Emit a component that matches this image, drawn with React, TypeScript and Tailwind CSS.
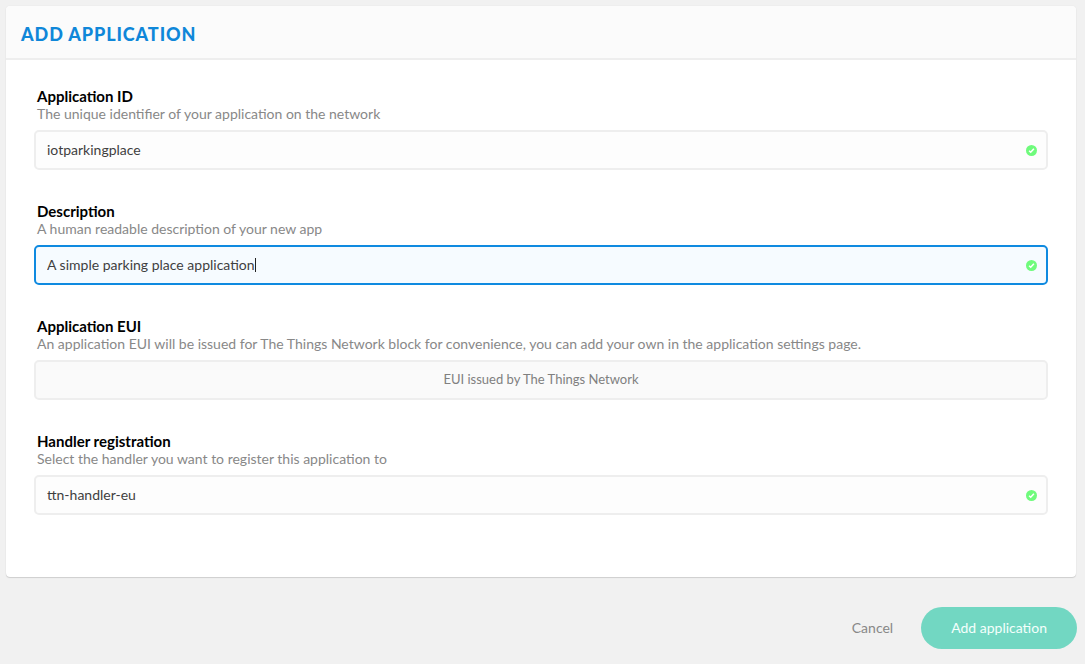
import React, { useState } from 'react';
import clsx from 'clsx';

interface FieldProps {
  id: string;
  label: string;
  help: string;
  valid?: boolean;
  children: React.ReactNode;
}

const control =
  'block w-full h-10 rounded-[5px] border-2 border-[#eeeeee] bg-[#fdfdfd] px-[11px] pb-[2px] text-[14px] text-[#3f3f3f] outline-none appearance-none';

const ValidIcon = () => (
  <svg className="pointer-events-none absolute right-[11px] top-[15px]" width="11" height="11" viewBox="0 0 11 11" aria-hidden="true">
    <circle cx="5.5" cy="5.5" r="5.5" fill="#6ffb7c" />
    <path d="M3.1 5.8 4.7 7.3 7.9 3.7" fill="none" stroke="#fff" strokeWidth="1.5" />
  </svg>
);

const Field: React.FC<FieldProps> = ({ id, label, help, valid, children }) => (
  <div>
    <div className="px-[3px] text-[14px] leading-[18px]">
      <label htmlFor={id} className="block text-[15px] font-bold text-black">
        {label}
      </label>
      <p id={`${id}-help`} className="text-[#888888]">{help}</p>
    </div>
    <div className="relative mt-[7px]">
      {children}
      {valid && <ValidIcon />}
    </div>
  </div>
);

export default function App() {
  const [appId, setAppId] = useState('iotparkingplace');
  const [description, setDescription] = useState('A simple parking place application');
  const [handler, setHandler] = useState('ttn-handler-eu');

  return (
    <form
      onSubmit={(e) => e.preventDefault()}
      className="min-h-screen bg-[#f1f1f1] pt-[6px] pr-2 pb-[15px] pl-[6px] font-['Lato',sans-serif]"
    >
      <section className="mr-px rounded-[4px] bg-white shadow-[0_0_1px_#0002,0_1px_1px_#0002]">
        <header className="rounded-t-[4px] border-b-2 border-[#eeeeee] bg-[#fbfbfb] px-[15px] pt-[18px] pb-[14px]">
          <h1 className="text-[18px] leading-5 font-black tracking-wider text-[#0f87d9] uppercase">
            Add application
          </h1>
        </header>

        <div className="flex flex-col gap-8 px-7 pt-[27px] pb-[62px]">
          <Field id="app-id" label="Application ID" help="The unique identifier of your application on the network" valid>
            <input
              id="app-id"
              aria-describedby="app-id-help"
              className={control}
              value={appId}
              onChange={(e) => setAppId(e.target.value)}
            />
          </Field>

          <Field id="description" label="Description" help="A human readable description of your new app" valid>
            <input
              id="description"
              aria-describedby="description-help"
              autoFocus
              onFocus={(e) => e.target.setSelectionRange(e.target.value.length, e.target.value.length)}
              className={clsx(control, 'peer caret-transparent focus:border-[#0f8ae0] focus:bg-[#f6fbff]')}
              value={description}
              onChange={(e) => setDescription(e.target.value)}
            />
            {/* Steady caret after the typed text */}
            <span
              aria-hidden="true"
              className="pointer-events-none absolute inset-y-0 left-[13px] hidden items-center text-[14px] whitespace-pre peer-focus:flex"
            >
              <span className="invisible">{description}</span>
              <span className="h-[14px] w-px bg-[#222222]" />
            </span>
          </Field>

          <Field
            id="app-eui"
            label="Application EUI"
            help="An application EUI will be issued for The Things Network block for convenience, you can add your own in the application settings page."
          >
            <input
              id="app-eui"
              aria-describedby="app-eui-help"
              readOnly
              className="block h-10 w-full rounded-[5px] border-2 border-[#eeeeee] bg-[#fafafa] px-[11px] pb-[2px] text-center text-[13px] text-[#808080] outline-none"
              value="EUI issued by The Things Network"
            />
          </Field>

          <Field id="handler" label="Handler registration" help="Select the handler you want to register this application to" valid>
            <select
              id="handler"
              aria-describedby="handler-help"
              className={control}
              value={handler}
              onChange={(e) => setHandler(e.target.value)}
            >
              <option>ttn-handler-eu</option>
            </select>
          </Field>
        </div>
      </section>

      <footer className="mt-[30px] flex items-center justify-end gap-7 text-[14px]">
        <button type="button" className="pb-[2px] text-[#888888]">Cancel</button>
        <button type="submit" className="h-[42px] rounded-full bg-[#72d7c2] px-[30px] pb-[2px] text-[#f4fffc]">
          Add application
        </button>
      </footer>
    </form>
  );
}
